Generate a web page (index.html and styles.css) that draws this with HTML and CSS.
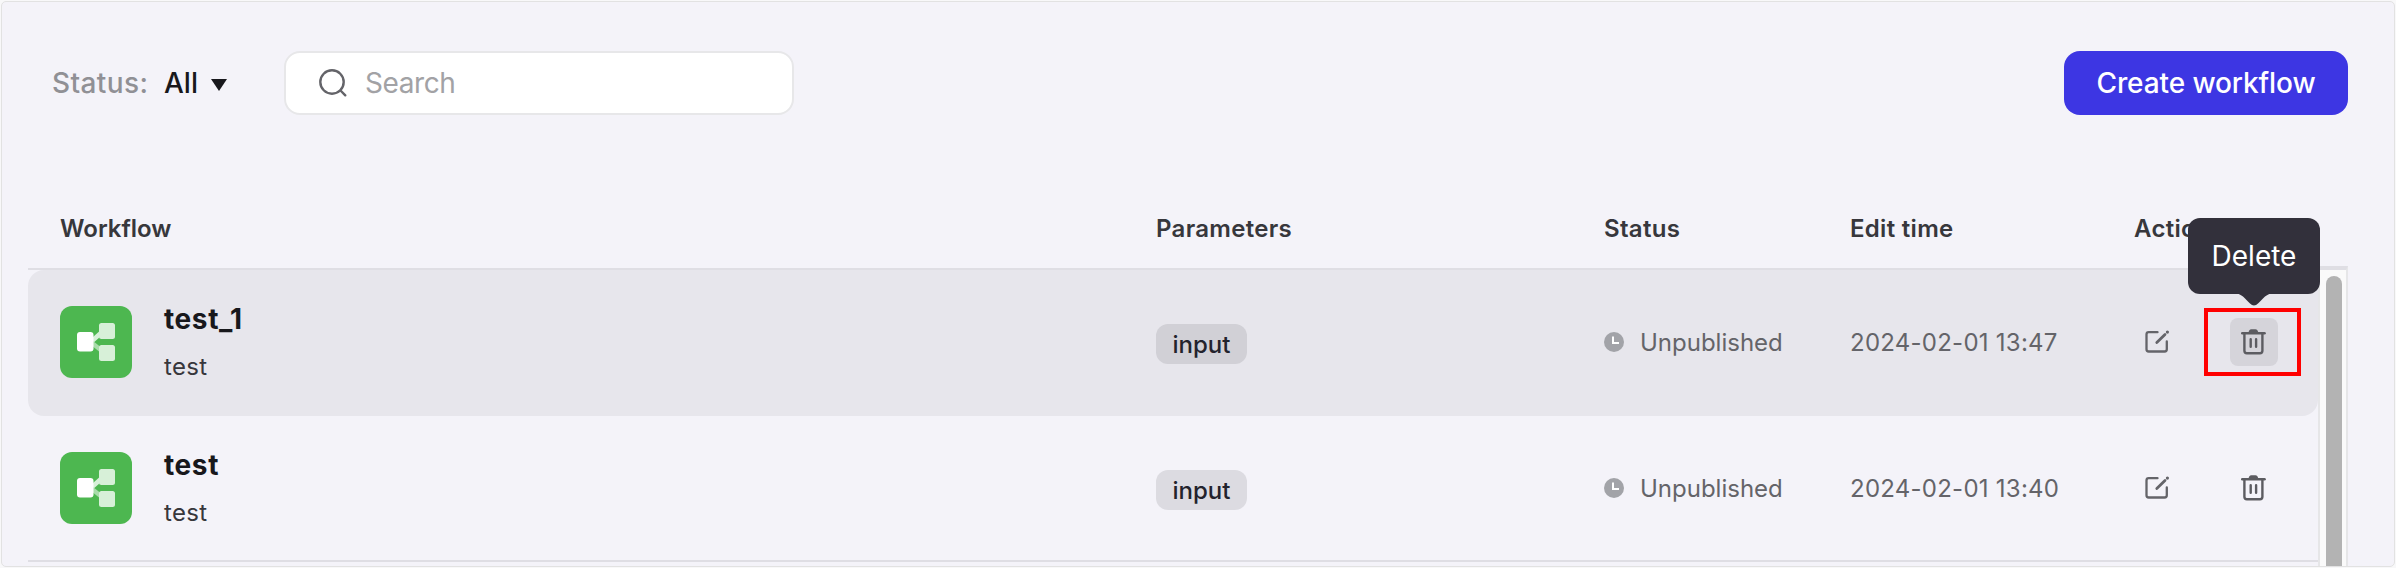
FILE: index.html
```
<!DOCTYPE html>
<html lang="en">
<head>
    <meta charset="UTF-8">
    <meta name="viewport" content="width=device-width, initial-scale=1.0">
    <title>Workflows</title>
    <link rel="stylesheet" href="styles.css">
</head>
<body>
    <!-- Shared icons -->
    <svg class="sprite" width="0" height="0">
        <symbol id="icon-flow" viewBox="0 0 72 72">
            <path d="M32 35 L42 26" stroke="#d7f0d8" stroke-width="4.5"/>
            <path d="M32 37 L42 45" stroke="#a9dcab" stroke-width="4.5"/>
            <rect x="39" y="17" width="16" height="16" rx="2.5" fill="#d7f0d8"/>
            <rect x="39" y="39" width="16" height="16" rx="2.5" fill="#d7f0d8"/>
            <rect x="17" y="26" width="16.5" height="19.5" rx="3" fill="#fff"/>
        </symbol>
        <symbol id="icon-clock" viewBox="0 0 20 20">
            <circle cx="10" cy="10" r="10" fill="#a2a3a8"/>
            <path d="M9 4.5 V11 H15" fill="none" stroke="#fff" stroke-width="2"/>
        </symbol>
        <symbol id="icon-edit" viewBox="0 0 28 28">
            <path d="M13.5 4.2 H4.7 Q2.5 4.2 2.5 6.4 V21.3 Q2.5 23.5 4.7 23.5 H20.6 Q22.8 23.5 22.8 21.3 V13.5" fill="none" stroke="#646469" stroke-width="2.3" stroke-linecap="round"/>
            <path d="M12.8 14.4 L21 6.4" stroke="#646469" stroke-width="2.8" stroke-linecap="round"/>
            <circle cx="23.4" cy="4.1" r="1.6" fill="#646469"/>
        </symbol>
        <symbol id="icon-trash" viewBox="0 0 28 28">
            <path d="M2.2 5.2 H24.6" stroke="#5c5c61" stroke-width="2.4" stroke-linecap="round"/>
            <path d="M8.4 5.2 Q8.9 1.2 11.4 1.2 H15.4 Q17.9 1.2 18.4 5.2 Z" fill="#5c5c61"/>
            <path d="M4.4 5.2 V22.8 Q4.4 25.3 6.9 25.3 H19.9 Q22.4 25.3 22.4 22.8 V5.2 M10.7 11.3 V18.8 M16.1 11.3 V18.8" fill="none" stroke="#5c5c61" stroke-width="2.4" stroke-linecap="round"/>
        </symbol>
    </svg>

    <div class="panel">
        <!-- Toolbar -->
        <div class="toolbar">
            <div class="filter">
                <span class="filter-label">Status:</span>
                <span class="filter-value">All</span>
                <svg class="caret" width="16" height="12" viewBox="0 0 16 12"><path d="M0 0 H16 L8 12 Z" fill="#18181c"/></svg>
            </div>
            <div class="search">
                <svg width="30" height="30" viewBox="0 0 30 30" fill="none" stroke="#646469" stroke-width="2.4" stroke-linecap="round"><circle cx="14" cy="14" r="11.7"/><path d="M22.5 22.5 L27.3 27.3"/></svg>
                <span>Search</span>
            </div>
            <button class="create">Create workflow</button>
        </div>

        <!-- Workflow list -->
        <div class="grid head">
            <span class="head-main">Workflow</span>
            <span>Parameters</span>
            <span>Status</span>
            <span>Edit time</span>
            <span>Action</span>
        </div>
        <div class="list">
            <div class="rows">
                <div class="grid row active">
                    <div class="workflow">
                        <svg class="logo"><use href="#icon-flow"/></svg>
                        <div>
                            <div class="name">test_1</div>
                            <div class="desc">test</div>
                        </div>
                    </div>
                    <div><span class="tag">input</span></div>
                    <div class="status"><svg width="20" height="20"><use href="#icon-clock"/></svg>Unpublished</div>
                    <div class="time">2024-02-01 13:47</div>
                    <div class="actions">
                        <span class="action"><svg width="28" height="28"><use href="#icon-edit"/></svg></span>
                        <span class="action hover">
                            <svg width="28" height="28"><use href="#icon-trash"/></svg>
                            <span class="marker"></span>
                            <span class="tooltip">Delete<svg class="arrow" width="42" height="13" viewBox="0 0 42 13"><path d="M0 0 C9 0 12 6 17 10.5 Q21 14.5 25 10.5 C30 6 33 0 42 0 Z" fill="#32303b"/></svg></span>
                        </span>
                    </div>
                </div>
                <div class="grid row">
                    <div class="workflow">
                        <svg class="logo"><use href="#icon-flow"/></svg>
                        <div>
                            <div class="name">test</div>
                            <div class="desc">test</div>
                        </div>
                    </div>
                    <div><span class="tag">input</span></div>
                    <div class="status"><svg width="20" height="20"><use href="#icon-clock"/></svg>Unpublished</div>
                    <div class="time">2024-02-01 13:40</div>
                    <div class="actions">
                        <span class="action"><svg width="28" height="28"><use href="#icon-edit"/></svg></span>
                        <span class="action"><svg width="28" height="28"><use href="#icon-trash"/></svg></span>
                    </div>
                </div>
            </div>
            <div class="scrollbar"><div class="thumb"></div></div>
        </div>
    </div>
</body>
</html>
```
FILE: styles.css
```
* {
    box-sizing: border-box;
}
body {
    margin: 0;
    padding: 1px;
    height: 568px;
    overflow: hidden;
    background: #f8f8f9;
    font-family: Inter, sans-serif;
    font-size: 24px;
    color: #37373c;
}
svg {
    display: block;
    flex: none;
}
.sprite {
    position: absolute;
}
.panel {
    width: 2394px;
    height: 566px;
    padding: 49px 46px 0 26px;
    background: #f4f3f9;
    border: 1px solid #e2e2e2;
    border-radius: 5px;
    overflow: hidden;
}
.toolbar {
    display: flex;
    align-items: center;
    height: 64px;
    padding-left: 24px;
    font-size: 28px;
}
.filter {
    display: flex;
    align-items: center;
    width: 232px;
    font-weight: 500;
}
.filter-label {
    width: 112px;
    color: #909095;
    letter-spacing: 0.4px;
}
.filter-value {
    width: 47px;
    color: #18181c;
    font-weight: 550;
}
.caret {
    margin-top: 4px;
}
.search {
    display: flex;
    align-items: center;
    gap: 17px;
    width: 510px;
    height: 64px;
    padding-left: 32px;
    background: #fff;
    border: 2px solid #e7e7e9;
    border-radius: 16px;
    color: #a2a2a5;
    letter-spacing: -0.4px;
}
.create {
    width: 284px;
    height: 64px;
    margin-left: auto;
    padding: 0;
    background: #3d36e3;
    color: #fff;
    border: none;
    border-radius: 16px;
    font: 550 28px Inter, sans-serif;
    letter-spacing: -0.1px;
}
.grid {
    display: grid;
    grid-template-columns: 1096px 448px 246px 284px 1fr;
    align-items: center;
    padding-left: 32px;
}
.head {
    height: 155px;
    padding-top: 74px;
    border-bottom: 2px solid #dfdee4;
    font-weight: 600;
    letter-spacing: 0.3px;
}
.head-main {
    letter-spacing: 0;
}
.list {
    display: flex;
    height: 298px;
}
.rows {
    width: 2290px;
}
.row {
    height: 146px;
    border-bottom: 2px solid #dfdee4;
}
.row.active {
    background: #e7e6ec;
    border-bottom-color: transparent;
    border-radius: 16px;
}
.workflow {
    display: flex;
    align-items: center;
    gap: 32px;
}
.logo {
    width: 72px;
    height: 72px;
    background: #4db750;
    border-radius: 12px;
}
.name {
    line-height: 40px;
    font-size: 28px;
    font-weight: 700;
    letter-spacing: 0.6px;
    color: #18181c;
}
.desc {
    margin-top: 10px;
    line-height: 36px;
    letter-spacing: 0.3px;
}
.tag {
    display: block;
    width: 91px;
    height: 40px;
    margin-top: 4px;
    line-height: 41px;
    text-align: center;
    background: rgba(46, 47, 56, 0.12);
    border-radius: 12px;
    color: #23232d;
    font-weight: 500;
}
.status {
    display: flex;
    align-items: center;
    gap: 16px;
    color: #646469;
}
.time {
    color: #646469;
    letter-spacing: 0.25px;
}
.actions {
    display: flex;
    gap: 48px;
}
.action {
    position: relative;
    display: flex;
    align-items: center;
    justify-content: center;
    width: 48px;
    height: 48px;
    border-radius: 8px;
}
.action.hover {
    background: #d5d4da;
}
.marker {
    position: absolute;
    top: -10px;
    left: -26px;
    width: 97px;
    height: 68px;
    border: 4px solid #f00;
}
.tooltip {
    position: absolute;
    left: -42px;
    bottom: 72px;
    width: 132px;
    height: 76px;
    line-height: 76px;
    text-align: center;
    background: #32303b;
    border-radius: 12px;
    color: #fff;
    font-size: 28px;
}
.arrow {
    position: absolute;
    left: 45px;
    top: 75px;
}
.scrollbar {
    width: 30px;
    margin-top: -4px;
    padding: 6px 4px 0 6px;
    background: #fafafa;
    border: 2px solid #e6e6e8;
    border-top: 4px solid #dfdee4;
    border-bottom: 0;
}
.thumb {
    width: 16px;
    height: 300px;
    background: #b3b3b3;
    border-radius: 8px;
}
```
